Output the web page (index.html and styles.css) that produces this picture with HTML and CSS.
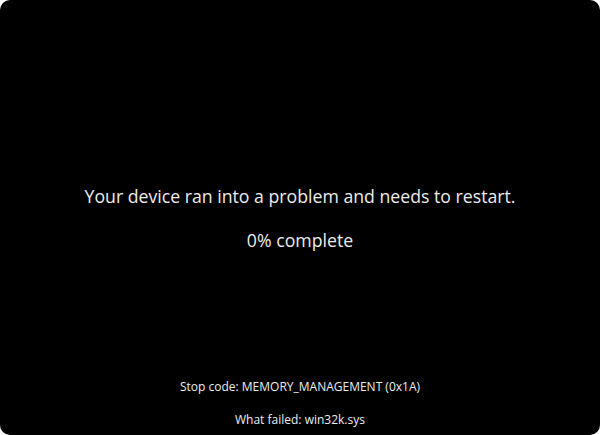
FILE: index.html
```html
<!DOCTYPE html>
<html>
<head>
<meta charset="utf-8">
<link rel="stylesheet" href="styles.css">
</head>
<body>
<div class="screen">
  <div class="message">
    <p class="headline">Your device ran into a problem and needs to restart.</p>
    <p class="progress">0% complete</p>
  </div>
  <div class="details">
    <p class="detail">Stop code: MEMORY_MANAGEMENT (0x1A)</p>
    <p class="detail">What failed: win32k.sys</p>
  </div>
</div>
</body>
</html>
```
FILE: styles.css
```css
html, body {
  margin: 0;
  padding: 0;
  background: #ffffff;
}
.screen {
  width: 600px;
  height: 435px;
  box-sizing: border-box;
  background: #000000;
  border-radius: 10px;
  display: flex;
  flex-direction: column;
  align-items: center;
  color: #ececec;
  font-family: "Open Sans", "Noto Sans", sans-serif;
  padding-top: 184px;
  padding-bottom: 6px;
}
.message {
  display: flex;
  flex-direction: column;
  align-items: center;
  gap: 20px;
}
.details {
  margin-top: auto;
  display: flex;
  flex-direction: column;
  align-items: center;
  gap: 15px;
}
p { margin: 0; }
.headline {
  font-size: 17.7px;
  line-height: 24px;
}
.progress {
  font-size: 17.7px;
  line-height: 24px;
}
.detail {
  font-size: 12px;
  line-height: 18px;
}
```
